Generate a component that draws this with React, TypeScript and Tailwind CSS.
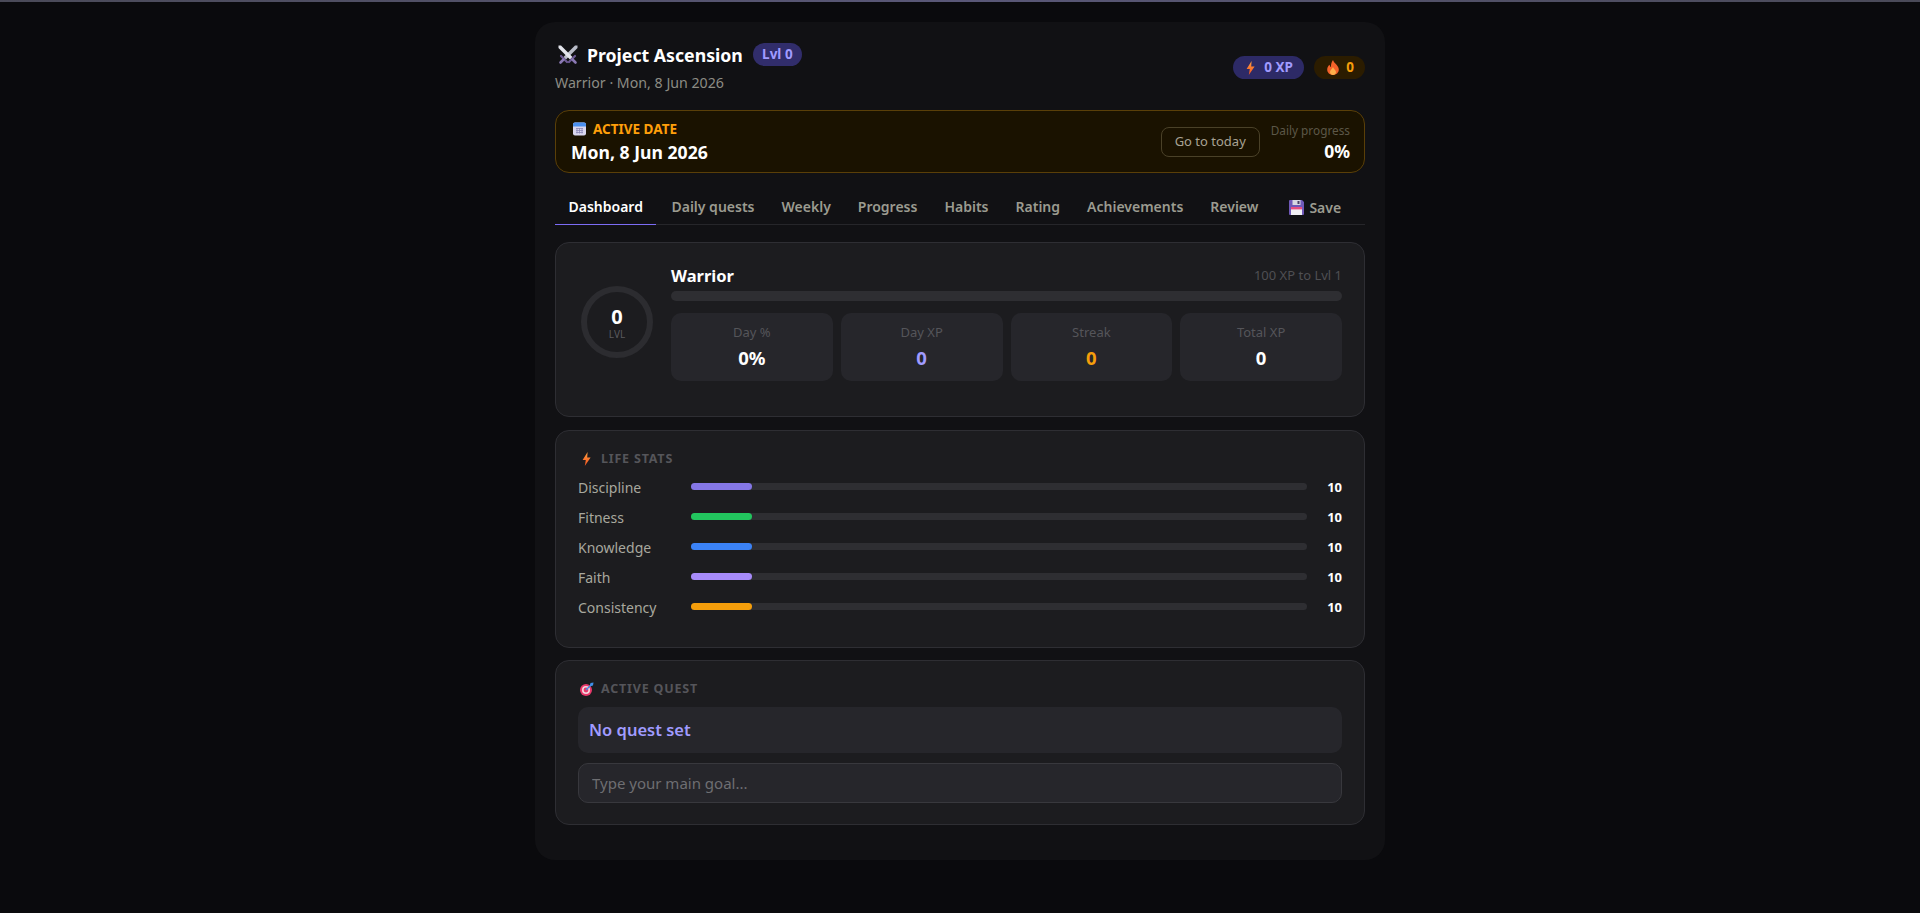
const font = { fontFamily: '"Noto Sans", "Open Sans", sans-serif' };

const tabs = ["Dashboard", "Daily quests", "Weekly", "Progress", "Habits", "Rating", "Achievements", "Review"];

const lifeStats = [
  { name: "Discipline", bar: "bg-[#8577e6]" },
  { name: "Fitness", bar: "bg-[#22c55e]" },
  { name: "Knowledge", bar: "bg-[#3b82f6]" },
  { name: "Faith", bar: "bg-[#a78bfa]" },
  { name: "Consistency", bar: "bg-[#f59e0b]" },
];

const dayStats = [
  { label: "Day %", value: "0%", color: "text-white" },
  { label: "Day XP", value: "0", color: "text-[#a09bff]" },
  { label: "Streak", value: "0", color: "text-[#f59e0b]" },
  { label: "Total XP", value: "0", color: "text-white" },
];

function Swords() {
  return (
    <svg width="20" height="20" viewBox="0 0 20 20" className="shrink-0">
      <path d="M17 0.5 L19.5 0.5 L19.5 3 L8 14.5 L5.5 12 Z" fill="#b9bcc8" />
      <path d="M3 0.5 L0.5 0.5 L0.5 3 L12 14.5 L14.5 12 Z" fill="#e3e5ec" />
      <path d="M3 11 L9 17 M17 11 L11 17" stroke="#6d5a94" strokeWidth="2.2" strokeLinecap="round" />
      <path d="M5.5 14.5 L2.5 17.5 M14.5 14.5 L17.5 17.5" stroke="#8a78b4" strokeWidth="2.6" strokeLinecap="round" />
    </svg>
  );
}

function Bolt({ w = 9, h = 14 }: { w?: number; h?: number }) {
  return (
    <svg width={w} height={h} viewBox="0 0 9 14" className="shrink-0">
      <defs>
        <linearGradient id="boltFill" x1="0" y1="0" x2="0" y2="1">
          <stop offset="0" stopColor="#ffa040" />
          <stop offset="1" stopColor="#f4511e" />
        </linearGradient>
      </defs>
      <path d="M5.6 0 L0.6 8 H3.8 L2.8 14 L8.6 5.6 H5.2 Z" fill="url(#boltFill)" />
    </svg>
  );
}

function Flame() {
  return (
    <svg width="12" height="15" viewBox="0 0 12 15" className="shrink-0">
      <path d="M6 0 C6.6 3 11.8 5.4 11.8 9.6 C11.8 12.8 9.2 15 6 15 C2.8 15 0.2 12.8 0.2 9.6 C0.2 7.4 1.4 5.8 2.6 4.8 C2.8 6 3.2 6.8 4 7 C3.8 4.4 4.6 2 6 0 Z" fill="#f4622a" />
      <path d="M6 7 C6.4 8.8 9 10 9 12 C9 13.8 7.6 15 6 15 C4.4 15 3 13.8 3 12 C3 10 5.4 9 6 7 Z" fill="#fdb04b" />
    </svg>
  );
}

function CalendarIcon() {
  return (
    <svg width="13" height="14" viewBox="0 0 13 14" className="shrink-0">
      <rect x="0" y="0.5" width="13" height="13" rx="2" fill="#d9d6ee" />
      <path d="M0 2.5 a2 2 0 0 1 2 -2 h9 a2 2 0 0 1 2 2 V4.5 H0 Z" fill="#4a90f0" />
      <path d="M3 6.5 H10 M3 8.5 H10 M3 10.5 H10 M4 6 V11.5 M6.5 6 V11.5 M9 6 V11.5" stroke="#8d88b8" strokeWidth="0.8" />
    </svg>
  );
}

function Floppy() {
  return (
    <svg width="15" height="15" viewBox="0 0 15 15" className="shrink-0">
      <path d="M0 1 a1 1 0 0 1 1 -1 H13 L15 2 V14 a1 1 0 0 1 -1 1 H1 a1 1 0 0 1 -1 -1 Z" fill="#6f58b8" />
      <rect x="3.5" y="0" width="8" height="5" fill="#d8d8e2" />
      <rect x="8.5" y="1" width="2" height="3" fill="#4a4168" />
      <rect x="2" y="7" width="11" height="8" fill="#f2f0f5" />
      <rect x="2" y="7" width="11" height="2.4" fill="#e84f80" />
    </svg>
  );
}

function Dart() {
  return (
    <svg width="14" height="14" viewBox="0 0 14 14" className="shrink-0">
      <circle cx="6" cy="8" r="6" fill="#e8386a" />
      <circle cx="6" cy="8" r="4" fill="#f4d6de" />
      <circle cx="6" cy="8" r="2.4" fill="#e8386a" />
      <path d="M6 8 L11.5 2.5" stroke="#3f8fe8" strokeWidth="1.4" />
      <path d="M10.5 1 L13.5 0.5 L13 3.5 L11 4 L10 3 Z" fill="#3f8fe8" />
    </svg>
  );
}

function SectionTitle({ icon, text }: { icon: React.ReactNode; text: string }) {
  return (
    <div className="flex h-[16px] items-center">
      <div className="flex w-[23px] items-center justify-center pr-[6px]">{icon}</div>
      <span className="text-[12.5px] font-bold tracking-[0.8px] text-[#55555a]">{text}</span>
    </div>
  );
}

export default function App() {
  return (
    <div className="min-h-screen bg-[#0a0a0d]" style={font}>
      <div className="h-[2px] bg-linear-to-r from-[#4a4a58] via-[#5a5878] to-[#4a4a58]" />
      <div className="mx-auto mt-[20px] h-[838px] w-[850px] rounded-[20px] bg-[#111114] px-5 pt-[21px]">
        {/* header */}
        <div className="flex h-[50px] items-start justify-between">
          <div>
            <div className="flex h-[23px] items-center">
              <div className="ml-[3px]">
                <Swords />
              </div>
              <span className="ml-[9px] mt-[1px] text-[17.7px] font-bold text-white">Project Ascension</span>
              <span className="ml-[10px] flex h-[23px] w-[49px] items-center justify-center rounded-full bg-[#312d6b] text-[13.5px] font-bold text-[#a09bff]">
                Lvl 0
              </span>
            </div>
            <div className="mt-[8px] text-[14.2px] leading-[18px] text-[#8c8c84]">Warrior · Mon, 8 Jun 2026</div>
          </div>
          <div className="mt-[13px] flex items-center gap-[10px]">
            <div className="flex h-[23px] w-[71px] items-center justify-center gap-[9px] rounded-full bg-[#2d2a66] pl-[2px] text-[13.5px] font-bold text-[#a09bff]">
              <Bolt />
              <span>0 XP</span>
            </div>
            <div className="flex h-[23px] w-[51px] items-center justify-center gap-[7px] rounded-full bg-[#2b1c00] pl-[2px] text-[13.5px] font-bold text-[#f59e0b]">
              <Flame />
              <span>0</span>
            </div>
          </div>
        </div>

        {/* active date */}
        <div className="mt-[17px] flex h-[63px] items-center justify-between rounded-[14px] border border-[#5a3f08] bg-[#1a1200] pl-[15px] pr-[14px]">
          <div>
            <div className="flex items-center gap-[7px] text-[13.5px] leading-[18px] font-bold text-[#ff9f0a]">
              <div className="ml-[2px]">
                <CalendarIcon />
              </div>
              <span>ACTIVE DATE</span>
            </div>
            <div className="mt-[3px] text-[17.6px] leading-[22px] font-bold text-white">Mon, 8 Jun 2026</div>
          </div>
          <div className="flex items-center gap-[11px]">
            <button className="h-[30px] w-[99px] rounded-[8px] border border-[#4a4128] text-[13px] text-[#a8a294]">Go to today</button>
            <div className="text-right">
              <div className="text-[11.8px] leading-[16px] text-[#5c5748]">Daily progress</div>
              <div className="mt-[2px] text-[17.5px] leading-[22px] font-bold text-white">0%</div>
            </div>
          </div>
        </div>

        {/* tabs */}
        <div className="mt-[16px] flex h-[36px] gap-[3px] border-b border-[#26262a]">
          {tabs.map((t, i) => (
            <div
              key={t}
              className={`-mb-px flex h-[36px] items-center border-b text-[14px] font-semibold ${i === 0 ? "border-[#7c6cf5] px-[13.5px] text-white" : "border-transparent px-[12px] text-[#9b9b90]"}`}
            >
              {t}
            </div>
          ))}
          <div className="-mb-px ml-[4px] flex h-[36px] items-center gap-[5px] px-[12px] text-[14px] font-semibold text-[#9b9b90]">
            <Floppy />
            <span>Save</span>
          </div>
        </div>

        {/* level card */}
        <div className="mt-[17px] flex h-[175px] rounded-[14px] border border-[#2e2e33] bg-[#1c1c1f] pl-[25px] pr-[22px] pt-[21px]">
          <div className="mt-[22px] flex h-[72px] w-[72px] shrink-0 flex-col items-center justify-center rounded-full border-[6px] border-[#2c2c30]">
            <div className="mt-[2px] text-[20px] leading-[22px] font-bold text-white">0</div>
            <div className="text-[10px] leading-[12px] text-[#5a5a5e]">LVL</div>
          </div>
          <div className="ml-[18px] flex-1">
            <div className="flex h-[24px] items-center justify-between">
              <span className="text-[16.5px] font-bold text-white">Warrior</span>
              <span className="text-[13px] text-[#4f4f53]">100 XP to Lvl 1</span>
            </div>
            <div className="mt-[3px] h-[10px] rounded-full bg-[#2e2e32]" />
            <div className="mt-[12px] grid grid-cols-4 gap-[8px]">
              {dayStats.map((s) => (
                <div key={s.label} className="flex h-[68px] flex-col items-center rounded-[10px] bg-[#26262b] pt-[10px]">
                  <div className="text-[13px] leading-[18px] text-[#55555a]">{s.label}</div>
                  <div className={`mt-[5px] text-[18.5px] leading-[24px] font-bold ${s.color}`}>{s.value}</div>
                </div>
              ))}
            </div>
          </div>
        </div>

        {/* life stats */}
        <div className="mt-[13px] h-[218px] rounded-[14px] border border-[#2e2e33] bg-[#1c1c1f] px-[22px] pt-[20px]">
          <SectionTitle icon={<Bolt />} text="LIFE STATS" />
          <div className="mt-[5px] flex flex-col">
            {lifeStats.map((s) => (
              <div key={s.name} className="flex h-[30px] items-center">
                <div className="w-[113px] text-[14px] text-[#a8a89e]">{s.name}</div>
                <div className="-mt-[1px] h-[7px] flex-1 rounded-full bg-[#2e2e32]">
                  <div className={`h-full w-[61px] rounded-full ${s.bar}`} />
                </div>
                <div className="mt-[2px] w-[35px] text-right text-[13px] font-bold text-white">10</div>
              </div>
            ))}
          </div>
        </div>

        {/* active quest */}
        <div className="mt-[12px] h-[165px] rounded-[14px] border border-[#2e2e33] bg-[#1c1c1f] px-[22px] pt-[20px]">
          <SectionTitle icon={<Dart />} text="ACTIVE QUEST" />
          <div className="mt-[10px] flex h-[46px] items-center rounded-[10px] bg-[#26262b] pl-[11px] text-[16.5px] font-semibold text-[#a09bff]">
            No quest set
          </div>
          <input
            readOnly
            placeholder="Type your main goal..."
            className="mt-[10px] h-[40px] w-full rounded-[10px] border border-[#38383d] bg-[#26262b] px-[13px] text-[15px] text-white outline-none placeholder:text-[#6e6e72]"
          />
        </div>
      </div>
    </div>
  );
}
